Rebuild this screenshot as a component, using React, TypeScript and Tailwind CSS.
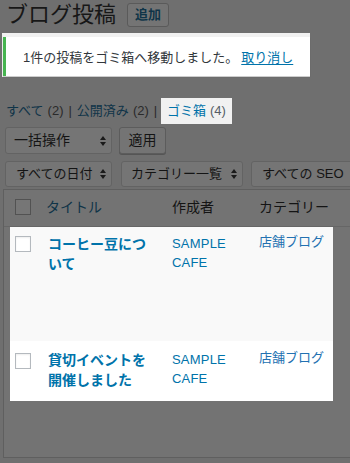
const jp = "font-['Liberation_Sans','Noto_Sans_CJK_JP',sans-serif]";

function Arrows({ color }: { color: string }) {
  return (
    <svg width="6" height="10" viewBox="0 0 6 10" className="shrink-0 ml-auto">
      <path d="M3 0 L6 4 H0 Z" fill={color} />
      <path d="M0 6 H6 L3 10 Z" fill={color} />
    </svg>
  );
}

function DimSelect({ label, w, size = "text-[13px]", pl = "pl-[10px]" }: { label: string; w: string; size?: string; pl?: string }) {
  return (
    <div
      className={`${w} ${pl} shrink-0 h-full flex items-center pr-[5px] rounded-[3px] border border-[#636363] bg-[#757575] text-[#141414] ${size} whitespace-nowrap`}
    >
      <span>{label}</span>
      <Arrows color="#1a1a1a" />
    </div>
  );
}

function Box({ dim }: { dim?: boolean }) {
  return (
    <div
      className={
        dim
          ? "w-[16px] h-[16px] border border-[#525252] bg-[#767676]"
          : "w-[16px] h-[16px] border border-[#b4b9be] bg-white shadow-[inset_0_1px_2px_rgba(0,0,0,0.07)]"
      }
    />
  );
}

type Row = { title: string[]; bg: string; h: string; box: string; pt: string; cat: string };

const rows: Row[] = [
  { title: ["コーヒー豆につ", "いて"], bg: "bg-[#f9f9f9]", h: "h-[114px]", box: "mt-[9px]", pt: "pt-[7px]", cat: "pt-[5px]" },
  { title: ["貸切イベントを", "開催しました"], bg: "bg-white", h: "h-[60px]", box: "mt-[12px]", pt: "pt-[9px]", cat: "pt-[7px]" },
];

export default function App() {
  return (
    <div className={`w-[350px] h-[463px] overflow-hidden bg-[#6f6f6f] ${jp}`}>
      {/* heading */}
      <div className="h-[33px] flex items-start">
        <h1 className="ml-[6px] text-[22px] leading-[30px] text-[#171717]">ブログ投稿</h1>
        <div className="ml-[11px] mt-[3px] w-[42px] h-[24px] flex items-center justify-center rounded-[3px] border border-[#5a5a5a] bg-[#747474] text-[13px] font-bold text-[#0f3448]">
          追加
        </div>
      </div>

      {/* notice */}
      <div className="ml-[2px] w-[308px] bg-[#f1f1f1] pt-[4px] pl-[1px] pb-[1px]">
        <div className="h-[39px] bg-white border-l-[3px] border-[#46b450] shadow-[0_1px_1px_rgba(0,0,0,0.15)] flex items-center pl-[17px] pt-[2px] text-[13px] text-[#32373c]">
          <span>1件の投稿をゴミ箱へ移動しました。</span>
          <span className="ml-[3px] text-[#0073aa] underline underline-offset-2">取り消し</span>
        </div>
      </div>

      {/* status links */}
      <div className="mt-[21px] h-[26px] flex items-stretch text-[13px]">
        <div className="w-[161px] shrink-0 pl-[6px] flex items-center text-[#0f3448] whitespace-nowrap">
          すべて <span className="text-[#2a2a2a] ml-[4px]">(2)</span>
          <span className="text-[#2a2a2a] mx-[5px]">|</span>
          公開済み <span className="text-[#2a2a2a] ml-[4px]">(2)</span>
          <span className="text-[#2a2a2a] ml-[5px]">|</span>
        </div>
        <div className="bg-[#f1f1f1] px-[6px] flex items-center whitespace-nowrap">
          <span className="text-[#0073aa]">ゴミ箱</span>
          <span className="text-[#555d66] ml-[4px]">(4)</span>
        </div>
      </div>

      {/* bulk actions */}
      <div className="mt-[3px] h-[27px] flex pl-[5px]">
        <DimSelect label="一括操作" w="w-[107px]" size="text-[14px]" pl="pl-[8px]" />
        <div className="ml-[7px] w-[47px] h-full flex items-center justify-center rounded-[3px] border border-[#5c5c5c] bg-[#747474] shadow-[0_1px_0_#555] text-[14px] text-[#141414]">
          適用
        </div>
      </div>

      {/* filters */}
      <div className="mt-[7px] h-[26px] flex pl-[5px]">
        <DimSelect label="すべての日付" w="w-[107px]" />
        <div className="ml-[9px] h-full">
          <DimSelect label="カテゴリー一覧" w="w-[122px]" pl="pl-[9px]" />
        </div>
        <div className="ml-[8px] h-full">
          <DimSelect label="すべての SEO" w="w-[120px]" />
        </div>
      </div>

      {/* table */}
      <div className="mt-[2px] ml-[3px] h-[269px] border-l border-t border-b border-[#5f5f5f] bg-[#737373]">
        <div className="h-[37px] flex items-start border-b border-[#666] pl-[11px]">
          <div className="w-[31px] shrink-0 mt-[9px]">
            <Box dim />
          </div>
          <div className="w-[126px] shrink-0 pt-[7px] text-[14px] leading-[20px] text-[#0f3448]">タイトル</div>
          <div className="w-[87px] shrink-0 pt-[7px] text-[14px] leading-[20px] text-[#141414]">作成者</div>
          <div className="pt-[7px] text-[14px] leading-[20px] text-[#141414] whitespace-nowrap">カテゴリー</div>
        </div>

        <div className="ml-[6px] w-[323px]">
          {rows.map((r) => (
            <div key={r.title[0]} className={`${r.h} ${r.bg} flex items-start pl-[5px]`}>
              <div className={`w-[33px] shrink-0 ${r.box}`}>
                <Box />
              </div>
              <div className={`w-[124px] shrink-0 ${r.pt} text-[14px] leading-[20px] font-bold text-[#0073aa]`}>
                {r.title.map((t) => (
                  <div key={t}>{t}</div>
                ))}
              </div>
              <div className={`w-[87px] shrink-0 ${r.pt} text-[13px] leading-[19px] text-[#0073aa] tracking-[0.2px]`}>
                <div>SAMPLE</div>
                <div>CAFE</div>
              </div>
              <div className={`${r.cat} text-[13px] leading-[20px] text-[#2271b1] whitespace-nowrap`}>店舗ブログ</div>
            </div>
          ))}
        </div>
      </div>
    </div>
  );
}
